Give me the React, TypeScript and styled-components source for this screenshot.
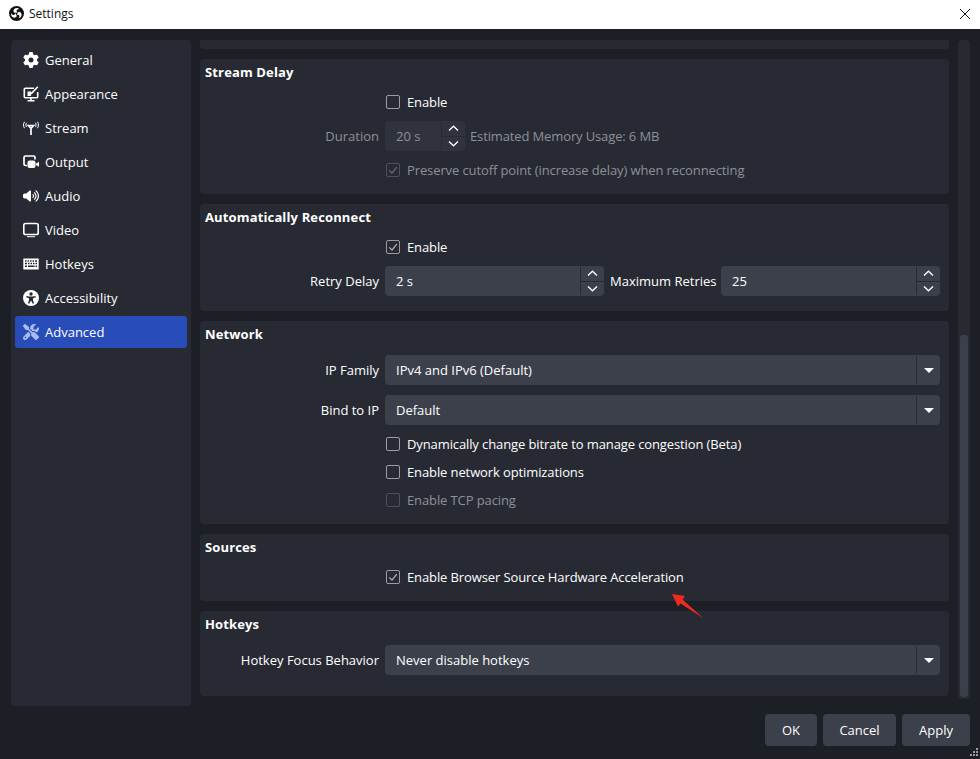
import React from 'react'
import styled, { createGlobalStyle } from 'styled-components'
import { FaGear, FaVolumeHigh, FaScrewdriverWrench } from 'react-icons/fa6'

const GlobalStyle = createGlobalStyle`
	html, body {
		margin: 0;
		padding: 0;
		background: #1d1f26;
	}
	body {
		font-family: 'Open Sans', 'Liberation Sans', sans-serif;
		font-size: 13px;
		color: #fff;
	}
`

const Window = styled.div`
	position: relative;
	width: 980px;
	height: 759px;
	overflow: hidden;
	display: flex;
	flex-direction: column;
	background: #1d1f26;
`

const TitleBar = styled.div`
	height: 29px;
	background: #fff;
	color: #111;
	display: flex;
	align-items: center;
	padding: 0 9px 2px 9px;
	box-sizing: border-box;
	font-size: 12px;
	gap: 5px;
`

const TitleText = styled.span`
	flex: 1;
`

const Main = styled.div`
	display: flex;
	align-items: flex-start;
	padding: 11px 10px 0 11px;
	height: 666px;
`

const Sidebar = styled.ul`
	width: 180px;
	height: 666px;
	box-sizing: border-box;
	margin: 0 9px 0 0;
	padding: 4px;
	list-style: none;
	background: #272a33;
	border-radius: 4px;
`

const NavItem = styled.li<{ $active?: boolean }>`
	height: 32px;
	margin-bottom: 2px;
	display: flex;
	align-items: center;
	gap: 6px;
	padding-left: 8px;
	border-radius: 3px;
	background: ${p => (p.$active ? '#284cb8' : 'transparent')};
	svg {
		width: 16px;
		height: 16px;
		flex: none;
		color: ${p => (p.$active ? '#a9bcf0' : '#fff')};
	}
`

const Content = styled.div`
	width: 749px;
	height: 656px;
	display: flex;
	flex-direction: column;
	gap: 10px;
`

const ClippedGroup = styled.div`
	height: 9px;
	flex: none;
	background: #272a33;
	border-radius: 0 0 4px 4px;
`

const Group = styled.section<{ $extra?: number }>`
	flex: none;
	background: #272a33;
	border-radius: 4px;
	padding: 0 9px ${p => 10 + (p.$extra || 0)}px 5px;
`

const GroupTitle = styled.h3`
	margin: 0;
	height: 26px;
	padding-bottom: 3px;
	line-height: 26px;
	font-size: 13px;
	font-weight: 700;
	letter-spacing: 0.14px;
`

const FieldRow = styled.div`
	display: flex;
	align-items: center;
	box-sizing: border-box;
	height: 40px;
	padding: 5px 0;
`

const FieldLabel = styled.label<{ $disabled?: boolean }>`
	width: 174px;
	margin-right: 6px;
	text-align: right;
	flex: none;
	color: ${p => (p.$disabled ? '#8e9096' : '#fff')};
`

const CheckRow = styled.label<{ $disabled?: boolean }>`
	display: flex;
	align-items: center;
	height: 28px;
	padding-left: 181px;
	gap: 7px;
	letter-spacing: -0.11px;
	color: ${p => (p.$disabled ? '#8e9096' : '#fff')};
`

const Box = styled.span<{ $disabled?: boolean }>`
	width: 14px;
	height: 14px;
	box-sizing: border-box;
	flex: none;
	border: 1px solid ${p => (p.$disabled ? '#4d5059' : '#9a9ca3')};
	border-radius: 2px;
	display: flex;
	align-items: center;
	justify-content: center;
	svg {
		width: 10px;
		height: 10px;
		color: ${p => (p.$disabled ? '#6a6d75' : '#b4b6bb')};
	}
`

const Spin = styled.div<{ $width: number; $disabled?: boolean }>`
	width: ${p => p.$width}px;
	height: 30px;
	flex: none;
	display: flex;
	border-radius: 4px;
	overflow: hidden;
	background: ${p => (p.$disabled ? '#30333d' : '#3c404b')};
	color: ${p => (p.$disabled ? '#8e9096' : '#fff')};
`

const FieldValue = styled.div`
	flex: 1;
	padding-left: 11px;
	line-height: 30px;
`

const SpinButtons = styled.div`
	width: 23px;
	flex: none;
	margin: 1px 0;
	display: flex;
	flex-direction: column;
	border-left: 1px solid #272a33;
`

const SpinButton = styled.div<{ $first?: boolean }>`
	flex: 1;
	display: flex;
	align-items: center;
	justify-content: center;
	border-top: ${p => (p.$first ? 'none' : '1px solid #272a33')};
	svg {
		width: 11px;
		height: 7px;
		color: #fff;
	}
`

const Combo = styled.div`
	flex: 1;
	height: 30px;
	display: flex;
	border-radius: 4px;
	background: #3c404b;
`

const ComboArrow = styled.div`
	width: 23px;
	flex: none;
	margin: 1px 0;
	border-left: 1px solid #272a33;
	display: flex;
	align-items: center;
	justify-content: center;
	&::after {
		content: '';
		border-left: 5px solid transparent;
		border-right: 5px solid transparent;
		border-top: 5px solid #fff;
	}
`

const InlineNote = styled.span<{ $disabled?: boolean }>`
	margin: 0 6px 0 5px;
	white-space: nowrap;
	letter-spacing: -0.13px;
	color: ${p => (p.$disabled ? '#8e9096' : '#fff')};
`

const RetriesLabel = styled.span`
	width: 105px;
	margin: 0 6px;
	flex: none;
	white-space: nowrap;
`

const Scrollbar = styled.div`
	width: 12px;
	height: 659px;
	flex: none;
	margin-left: 9px;
	padding: 295px 2px 2px;
	box-sizing: border-box;
	background: #272a33;
	border-radius: 4px;
`

const Thumb = styled.div`
	height: 100%;
	background: #3c404b;
	border-radius: 3px;
`

const Footer = styled.div`
	display: flex;
	justify-content: flex-end;
	gap: 6px;
	padding: 8px 10px 0 0;
`

const Button = styled.button<{ $width: number }>`
	width: ${p => p.$width}px;
	height: 32px;
	border: none;
	border-radius: 4px;
	background: #3c404b;
	color: #fff;
	font: inherit;
	padding: 0;
`

const Arrow = styled.svg`
	position: absolute;
	left: 670px;
	top: 592px;
	width: 36px;
	height: 30px;
`

const Grip = styled.svg`
	position: absolute;
	right: 1px;
	bottom: 2px;
	width: 9px;
	height: 9px;
`

const Close = styled.svg`
	width: 12px;
	height: 12px;
`

// one blade of the logo, drawn three times around the centre
const bladePath = 'M9 11C8.500 7 11.500 4 15.500 4C18 4 20 5.200 21 7C19 6 16.500 6.500 15.500 8.500C14.800 10 15.500 12 17 13C13.500 14 9.800 14 9 11z'

const ObsLogo = () => (
	<svg width='15' height='15' viewBox='0 0 30 30'>
		<circle cx='15' cy='15' r='15' fill='#111' />
		{[0, 120, 240].map(angle => (
			<path key={angle} d={bladePath} fill='#fff' transform={`rotate(${angle} 15 15)`} />
		))}
	</svg>
)

const AppearanceIcon = () => (
	<svg viewBox='0 0 16 16' fill='none' stroke='currentColor'>
		<path d='M11 2.300H2.300A1 1 0 0 0 1.300 3.300v7.400a1 1 0 0 0 1 1h11.400a1 1 0 0 0 1-1V6' strokeWidth='1.600' />
		<path d='M4.500 14.800h7M8 12v2.500' strokeWidth='1.500' />
		<path d='M4.500 5.500h3.800l-.5 4.500H4.500z' fill='currentColor' stroke='none' />
		<path d='M8 8 14.800.8' strokeWidth='1.600' />
	</svg>
)

const StreamIcon = () => (
	<svg viewBox='0 0 16 16' fill='none' stroke='currentColor' strokeWidth='1'>
		<path d='M5.500 5.500h5L8 8.500zM8 7.500v7.500' strokeWidth='1.700' />
		<path d='M3.600 2.800c-.9 1.300-.9 3 0 4.300M1.500 1.800c-1.300 2-1.300 4.400 0 6.400M12.400 2.800c.9 1.300.9 3 0 4.300M14.500 1.800c1.300 2 1.300 4.400 0 6.400' />
	</svg>
)

const OutputIcon = () => (
	<svg viewBox='0 0 16 16' fill='none' stroke='currentColor'>
		<path d='M4 11.500H2.500A1.500 1.500 0 0 1 1 10V3.500A1.500 1.500 0 0 1 2.500 2h8A1.500 1.500 0 0 1 12 3.500V5.500' strokeWidth='1.700' />
		<rect x='4.500' y='6.500' width='8' height='7.500' rx='2' fill='currentColor' stroke='none' />
		<path d='M12.500 10 16 7.800v5L12.500 10.800z' fill='currentColor' stroke='none' />
	</svg>
)

const VideoIcon = () => (
	<svg viewBox='0 0 16 16' fill='none' stroke='currentColor'>
		<rect x='.8' y='1.500' width='14.400' height='11' rx='1.800' strokeWidth='1.600' />
		<path d='M4 14.700h8' strokeWidth='1' />
	</svg>
)

const KeyboardIcon = () => (
	<svg viewBox='0 0 16 16'>
		<path
			fillRule='evenodd'
			fill='currentColor'
			d='M.3 2.500h15.400v11H.3zM2 4.200v1.500h1.500V4.200zM4.500 4.200v1.500H6V4.200zM7 4.200v1.500h1.500V4.200zM9.500 4.200v1.500H11V4.200zM12 4.200v1.500h2V4.200zM2 6.800v1.500h2V6.800zM5 6.800v1.500h1.500V6.800zM7.500 6.800v1.500H9V6.800zM10 6.800v1.500h1.500V6.800zM12.500 6.800v1.500H14V6.800zM2 9.500V11h2V9.500zM5 9.500V11h6.500V9.500zM12.500 9.500V11H14V9.500z'
		/>
	</svg>
)

const AccessibilityIcon = () => (
	<svg viewBox='0 0 16 16'>
		<circle cx='8' cy='8' r='8' fill='currentColor' />
		<circle cx='8' cy='4' r='1.700' fill='#272a33' />
		<path d='M3.500 6 6 6.500h4L12.500 6 12.800 7.200 10 8.200V10L11 13.300 9.800 13.700 8 10.500 6.200 13.700 5 13.300 6 10V8.200L3.200 7.200z' fill='#272a33' />
	</svg>
)

const Check = () => (
	<svg viewBox='0 0 12 12' fill='none' stroke='currentColor' strokeWidth='1.500'>
		<path d='M1.500 6.500 4.800 9.800 10.500 2.500' />
	</svg>
)

const ChevronUp = () => (
	<svg viewBox='0 0 11 7' fill='none' stroke='currentColor' strokeWidth='1.300'>
		<path d='M1 5.500 5.500 1.200 10 5.500' />
	</svg>
)

const ChevronDown = () => (
	<svg viewBox='0 0 11 7' fill='none' stroke='currentColor' strokeWidth='1.300'>
		<path d='M1 1.500 5.500 5.800 10 1.500' />
	</svg>
)

const navItems = [
	{ label: 'General', icon: <FaGear /> },
	{ label: 'Appearance', icon: <AppearanceIcon /> },
	{ label: 'Stream', icon: <StreamIcon /> },
	{ label: 'Output', icon: <OutputIcon /> },
	{ label: 'Audio', icon: <FaVolumeHigh /> },
	{ label: 'Video', icon: <VideoIcon /> },
	{ label: 'Hotkeys', icon: <KeyboardIcon /> },
	{ label: 'Accessibility', icon: <AccessibilityIcon /> },
	{ label: 'Advanced', icon: <FaScrewdriverWrench />, active: true },
]

type CheckItemProps = { label: string; checked?: boolean; disabled?: boolean }

const CheckItem = ({ label, checked, disabled }: CheckItemProps) => (
	<CheckRow $disabled={disabled}>
		<Box $disabled={disabled}>{checked && <Check />}</Box>
		{label}
	</CheckRow>
)

const SpinBox = ({ value, width, disabled }: { value: string; width: number; disabled?: boolean }) => (
	<Spin $width={width} $disabled={disabled}>
		<FieldValue>{value}</FieldValue>
		<SpinButtons>
			<SpinButton $first>
				<ChevronUp />
			</SpinButton>
			<SpinButton>
				<ChevronDown />
			</SpinButton>
		</SpinButtons>
	</Spin>
)

const ComboBox = ({ value }: { value: string }) => (
	<Combo>
		<FieldValue>{value}</FieldValue>
		<ComboArrow />
	</Combo>
)

const App = () => {
	return (
		<Window>
			<GlobalStyle />
			<TitleBar>
				<ObsLogo />
				<TitleText>Settings</TitleText>
				<Close viewBox='0 0 12 12' fill='none' stroke='#111' strokeWidth='1'>
					<path d='M1 1 11 11M11 1 1 11' />
				</Close>
			</TitleBar>

			<Main>
				<Sidebar>
					{navItems.map(item => (
						<NavItem key={item.label} $active={item.active}>
							{item.icon}
							{item.label}
						</NavItem>
					))}
				</Sidebar>

				<Content>
					<ClippedGroup />

					<Group>
						<GroupTitle>Stream Delay</GroupTitle>
						<CheckItem label='Enable' />
						<FieldRow>
							<FieldLabel $disabled>Duration</FieldLabel>
							<SpinBox value='20 s' width={80} disabled />
							<InlineNote $disabled>Estimated Memory Usage: 6 MB</InlineNote>
						</FieldRow>
						<CheckItem label='Preserve cutoff point (increase delay) when reconnecting' checked disabled />
					</Group>

					<Group>
						<GroupTitle>Automatically Reconnect</GroupTitle>
						<CheckItem label='Enable' checked />
						<FieldRow>
							<FieldLabel>Retry Delay</FieldLabel>
							<SpinBox value='2 s' width={219} />
							<RetriesLabel>Maximum Retries</RetriesLabel>
							<SpinBox value='25' width={219} />
						</FieldRow>
					</Group>

					<Group>
						<GroupTitle>Network</GroupTitle>
						<FieldRow>
							<FieldLabel>IP Family</FieldLabel>
							<ComboBox value='IPv4 and IPv6 (Default)' />
						</FieldRow>
						<FieldRow>
							<FieldLabel>Bind to IP</FieldLabel>
							<ComboBox value='Default' />
						</FieldRow>
						<CheckItem label='Dynamically change bitrate to manage congestion (Beta)' />
						<CheckItem label='Enable network optimizations' />
						<CheckItem label='Enable TCP pacing' disabled />
					</Group>

					<Group>
						<GroupTitle>Sources</GroupTitle>
						<CheckItem label='Enable Browser Source Hardware Acceleration' checked />
					</Group>

					<Group $extra={6}>
						<GroupTitle>Hotkeys</GroupTitle>
						<FieldRow>
							<FieldLabel>Hotkey Focus Behavior</FieldLabel>
							<ComboBox value='Never disable hotkeys' />
						</FieldRow>
					</Group>
				</Content>

				<Scrollbar>
					<Thumb />
				</Scrollbar>
			</Main>

			<Footer>
				<Button $width={52}>OK</Button>
				<Button $width={73}>Cancel</Button>
				<Button $width={68}>Apply</Button>
			</Footer>

			<Arrow viewBox='0 0 36 30'>
				<path d='M2 2 15 4 12.500 7.500 33 26 10.500 11.500 8 14.500z' fill='#f02a1c' />
			</Arrow>

			<Grip viewBox='0 0 9 9' fill='#9a9ca3'>
				<rect x='6' y='0' width='2' height='2' />
				<rect x='3' y='3' width='2' height='2' />
				<rect x='6' y='3' width='2' height='2' />
				<rect x='0' y='6' width='2' height='2' />
				<rect x='3' y='6' width='2' height='2' />
				<rect x='6' y='6' width='2' height='2' />
			</Grip>
		</Window>
	)
}

export default App
